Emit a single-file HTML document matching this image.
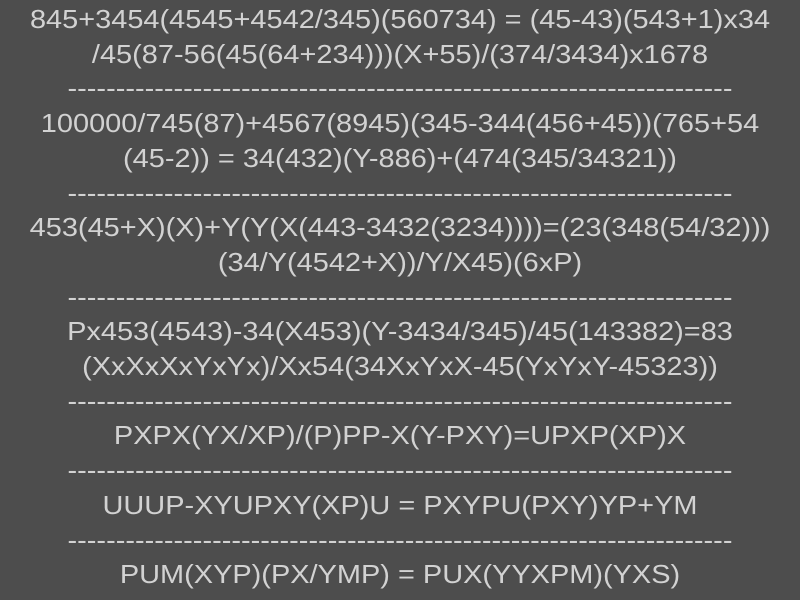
<!DOCTYPE html>
<html><head><style>
html,body{margin:0;padding:0;background:#4d4d4d;width:800px;height:600px;overflow:hidden}
.t{font-family:"Liberation Sans",Arial,sans-serif;font-size:26px;line-height:34.7px;color:#d2d2d2;text-align:center;white-space:pre;padding-top:2px;transform:scaleX(1.113);transform-origin:400px 0;width:800px}
</style></head><body><div class="t">845+3454(4545+4542/345)(560734) = (45-43)(543+1)x34
/45(87-56(45(64+234)))(X+55)/(374/3434)x1678
---------------------------------------------------------------------
100000/745(87)+4567(8945)(345-344(456+45))(765+54
(45-2)) = 34(432)(Y-886)+(474(345/34321))
---------------------------------------------------------------------
453(45+X)(X)+Y(Y(X(443-3432(3234))))=(23(348(54/32)))
(34/Y(4542+X))/Y/X45)(6xP)
---------------------------------------------------------------------
Px453(4543)-34(X453)(Y-3434/345)/45(143382)=83
(XxXxXxYxYx)/Xx54(34XxYxX-45(YxYxY-45323))
---------------------------------------------------------------------
PXPX(YX/XP)/(P)PP-X(Y-PXY)=UPXP(XP)X
---------------------------------------------------------------------
UUUP-XYUPXY(XP)U = PXYPU(PXY)YP+YM
---------------------------------------------------------------------
PUM(XYP)(PX/YMP) = PUX(YYXPM)(YXS)</div></body></html>
